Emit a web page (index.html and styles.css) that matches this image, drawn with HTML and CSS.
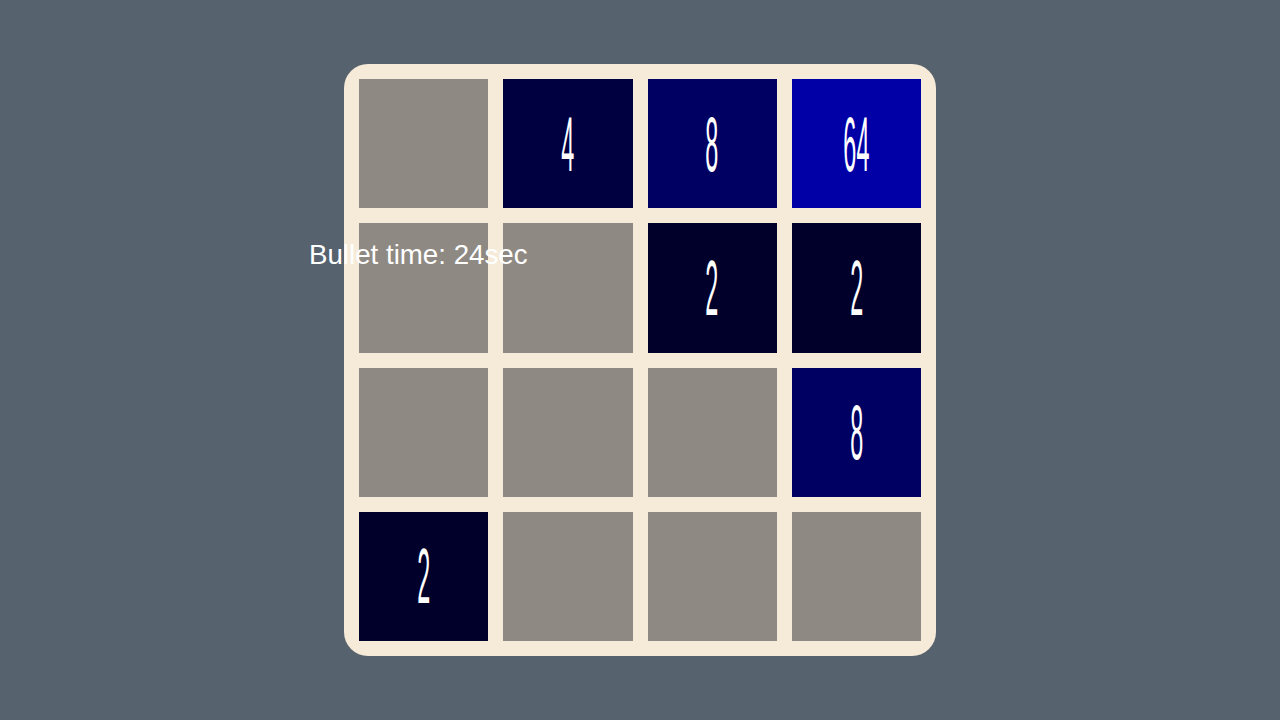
FILE: index.html
```html
<!DOCTYPE html>
<html>
<head>
<meta charset="utf-8">
<link rel="stylesheet" href="styles.css">
</head>
<body>
<div class="stage">
  <div class="board">
    <div class="tile"></div>
    <div class="tile t4"><span>4</span></div>
    <div class="tile t8"><span>8</span></div>
    <div class="tile t64"><span>64</span></div>
    <div class="tile"></div>
    <div class="tile"></div>
    <div class="tile t2"><span>2</span></div>
    <div class="tile t2"><span>2</span></div>
    <div class="tile"></div>
    <div class="tile"></div>
    <div class="tile"></div>
    <div class="tile t8"><span>8</span></div>
    <div class="tile t2"><span>2</span></div>
    <div class="tile"></div>
    <div class="tile"></div>
    <div class="tile"></div>
  </div>
  <div class="bullet">Bullet time: 24sec</div>
</div>
</body>
</html>
```
FILE: styles.css
```css
html, body {
  margin: 0;
  padding: 0;
  width: 1280px;
  height: 720px;
  background: #56636f;
  overflow: hidden;
}
.stage {
  position: relative;
  width: 1280px;
  height: 720px;
  display: flex;
  justify-content: center;
  align-items: flex-start;
  padding-top: 64px;
  box-sizing: border-box;
}
.board {
  width: 592px;
  height: 592px;
  box-sizing: border-box;
  padding: 15px;
  background: #f6ebd8;
  border-radius: 24px;
  display: grid;
  grid-template-columns: repeat(4, 1fr);
  grid-template-rows: repeat(4, 1fr);
  gap: 15px;
}
.tile {
  background: #8e8a83;
  display: flex;
  align-items: center;
  justify-content: center;
  overflow: hidden;
}
.tile span {
  font-family: "Liberation Sans", Arial, sans-serif;
  color: #ffffff;
  font-size: 78px;
  line-height: 1;
  display: inline-block;
  transform: scale(0.3, 1);
}
.t2 { background: #00002b; }
.t4 { background: #000040; }
.t8 { background: #000062; }
.t64 { background: #0000a6; }
.bullet {
  position: absolute;
  left: 309px;
  top: 239px;
  font-family: "Liberation Sans", Arial, sans-serif;
  font-size: 27.7px;
  color: #ffffff;
  white-space: nowrap;
}
```
